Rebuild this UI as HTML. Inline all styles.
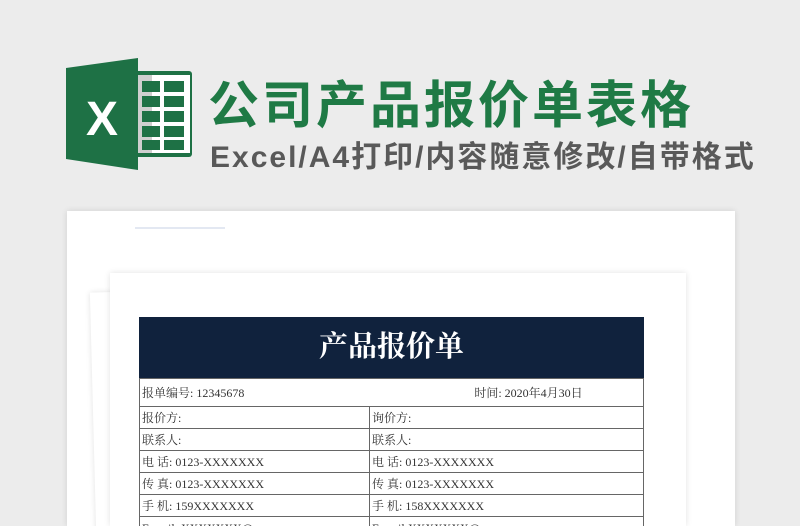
<!DOCTYPE html><html><head><meta charset="utf-8"><style>
html,body{margin:0;width:800px;height:526px;overflow:hidden}
body{background:#ececec;position:relative;font-family:"Liberation Serif","Noto Serif CJK SC",serif}
.a{position:absolute}
.t1{left:208px;top:64px;font:bold 51px "Liberation Sans","Noto Sans CJK SC",sans-serif;color:#1f7a45;letter-spacing:3px;white-space:nowrap}
.t2{left:210px;top:132px;font:bold 30px "Liberation Sans","Noto Sans CJK SC",sans-serif;color:#595959;letter-spacing:2px;white-space:nowrap}
.p{background:#fff;box-shadow:0 0 6px rgba(0,0,0,.12)}
.clip{position:absolute;left:0;top:0;width:800px;height:526px;overflow:hidden}
table{border-collapse:collapse;position:absolute;left:139px;width:505px;font-size:12px;color:#333}
td{border:1.5px solid #666;height:21px;padding:0 2px;white-space:nowrap;line-height:14px}
</style></head><body><div class="clip">
<svg class="a" style="left:66px;top:58px" width="128" height="112" viewBox="0 0 128 112">
<rect x="68" y="13" width="58" height="86" rx="3" fill="#1e7145"/>
<rect x="72" y="17" width="52" height="78" fill="#fff"/>
<rect x="72" y="17" width="14" height="78" fill="#cfcfcf"/>
<g fill="#1e7145"><rect x="76" y="23" width="18" height="11"/><rect x="98" y="23" width="20" height="11"/><rect x="76" y="38" width="18" height="11"/><rect x="98" y="38" width="20" height="11"/><rect x="76" y="53" width="18" height="11"/><rect x="98" y="53" width="20" height="11"/><rect x="76" y="68" width="18" height="11"/><rect x="98" y="68" width="20" height="11"/><rect x="76" y="82" width="18" height="10"/><rect x="98" y="82" width="20" height="10"/></g>
<path d="M0 10 L72 0 L72 112 L0 101Z" fill="#1e7145"/>
<text x="36" y="77" fill="#fff" font-family="Liberation Sans" font-weight="bold" font-size="48" text-anchor="middle">X</text>
</svg>
<div class="a t1">公司产品报价单表格</div>
<div class="a t2">Excel/A4打印/内容随意修改/自带格式</div>
<div class="a p" style="left:67px;top:211px;width:668px;height:315px"></div>
<div class="a" style="left:135px;top:227px;width:90px;height:2px;background:#e3e8f2"></div>
<div class="a p" style="left:93px;top:285px;width:580px;height:245px;transform:rotate(-1.5deg)"></div>
<div class="a p" style="left:110px;top:273px;width:576px;height:253px"></div>
<div class="a" style="left:139px;top:317px;width:505px;height:61px;background:#10223d;color:#fff;text-align:center;font:bold 29px/61px 'Liberation Serif','Noto Serif CJK SC',serif">产品报价单</div>
<table style="top:378px">
<tr><td colspan="2" style="height:27px">报单编号: 12345678<span style="margin-left:230px">时间: 2020年4月30日</span></td></tr>
<tr><td style="width:225px">报价方:</td><td>询价方:</td></tr>
<tr><td>联系人:</td><td>联系人:</td></tr>
<tr><td>电 话: 0123-XXXXXXX</td><td>电 话: 0123-XXXXXXX</td></tr>
<tr><td>传 真: 0123-XXXXXXX</td><td>传 真: 0123-XXXXXXX</td></tr>
<tr><td>手 机: 159XXXXXXX</td><td>手 机: 158XXXXXXX</td></tr>
<tr><td>E-mail: XXXXXXX@qq.com</td><td>E-mail:XXXXXXX@qq.com</td></tr>
</table>
</div></body></html>
